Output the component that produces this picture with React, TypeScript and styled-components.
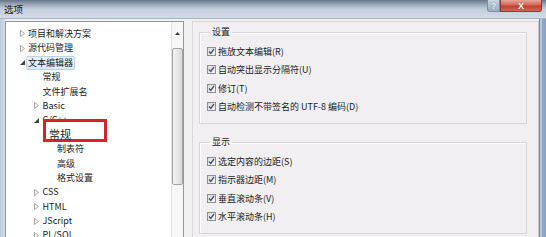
import React from "react";
import styled, { createGlobalStyle } from "styled-components";

const GlobalStyle = createGlobalStyle`
  html, body {
    margin: 0;
    padding: 0;
  }
  body {
    width: 546px;
    height: 237px;
    overflow: hidden;
    background: #c6d4e3;
    font-family: "Noto Sans CJK SC", "Noto Sans", sans-serif;
  }
`;

const Window = styled.div`
  width: 546px;
  height: 237px;
  display: flex;
  flex-direction: column;
  overflow: hidden;
`;

const TitleBar = styled.div`
  height: 18px;
  flex: none;
  display: flex;
  align-items: flex-start;
  background: linear-gradient(
    180deg,
    #66748a 0px,
    #95a3b4 4px,
    #c2cedb 9px,
    #d2dce7 18px
  );
  border-bottom: 1px solid #a7b5c4;
`;

const Title = styled.span`
  font-size: 9.5px;
  line-height: 18px;
  padding-left: 4px;
  color: #141414;
`;

const Caption = styled.div`
  margin-left: auto;
  margin-right: 4px;
  display: flex;
`;

const CaptionButton = styled.div<{ $close?: boolean }>`
  width: ${(p) => (p.$close ? 42 : 13)}px;
  height: 12px;
  box-sizing: border-box;
  display: flex;
  align-items: center;
  justify-content: center;
  font-family: "Liberation Sans", sans-serif;
  font-weight: bold;
  font-size: 9px;
  color: ${(p) => (p.$close ? "#ffffff" : "#eef3f8")};
  border: 1px solid ${(p) => (p.$close ? "#8a3a30" : "#7d8ea3")};
  border-top: none;
  border-radius: ${(p) => (p.$close ? "0 0 3px 0" : "0 0 0 3px")};
  background: ${(p) =>
    p.$close
      ? "linear-gradient(180deg, #e6a598 0%, #d0675a 45%, #c2402f 55%, #d0665a 100%)"
      : "linear-gradient(180deg, #c9d5e2 0%, #aebfd1 50%, #9fb1c6 100%)"};
  text-shadow: 0 0 1px rgba(0, 0, 0, 0.4);
`;

const Main = styled.div`
  flex: 1;
  min-height: 0;
  display: flex;
`;

const LeftFrame = styled.div`
  width: 5px;
  flex: none;
  background: linear-gradient(90deg, #bccbdc, #cfdbe8);
`;

const RightFrame = styled.div`
  width: 7px;
  flex: none;
  background: linear-gradient(
    90deg,
    #7188aa 0px,
    #7188aa 1px,
    #b7c7dc 1px,
    #b7c7dc 3px,
    #91a7c5 3px,
    #8aa1c0 7px
  );
`;

const Body = styled.div`
  flex: 1;
  min-width: 0;
  display: flex;
  gap: 8px;
  padding-top: 2px;
  background: #f0f0f0;
`;

const Tree = styled.div`
  width: 179px;
  flex: none;
  box-sizing: border-box;
  border: 1px solid #8e99a6;
  border-bottom: none;
  background: #ffffff;
  display: flex;
`;

const TreeList = styled.div`
  flex: 1;
  padding-top: 4.8px;
`;

const Row = styled.div<{ $level: number }>`
  height: 14.4px;
  display: flex;
  align-items: center;
  padding-left: ${(p) => 12 + p.$level * 14.5}px;
  font-size: 9px;
  color: #1b1b1b;
  white-space: nowrap;
`;

const ArrowCell = styled.span`
  width: 8px;
  margin-right: 2px;
  display: flex;
  align-items: center;
  justify-content: center;
`;

const Label = styled.span<{ $selected?: boolean }>`
  display: inline-block;
  line-height: 12px;
  margin-left: ${(p) => (p.$selected ? "-2px" : "0")};
  padding: ${(p) => (p.$selected ? "0 1px" : "0")};
  border: ${(p) => (p.$selected ? "1px solid #b4d3f3" : "none")};
  border-radius: 2px;
  background: ${(p) =>
    p.$selected ? "linear-gradient(180deg, #eef6fe, #d9e9fa)" : "none"};
`;

const Mark = styled.span`
  position: relative;
  display: inline-block;
  line-height: 14.4px;
`;

const MarkBox = styled.span`
  position: absolute;
  left: -14px;
  top: -7.6px;
  width: 64px;
  height: 23px;
  box-sizing: border-box;
  border: 3.5px solid #d3242c;
  background: #ffffff;
`;

const MarkText = styled.span`
  position: relative;
  font-size: 11px;
  margin-left: -8px;
  color: #222;
`;

const ScrollBar = styled.div`
  width: 11px;
  flex: none;
  display: flex;
  flex-direction: column;
  background: #f7f7f7;
  border-left: 1px solid #e2e2e2;
`;

const ScrollButton = styled.div`
  height: 22px;
  flex: none;
  display: flex;
  align-items: center;
  justify-content: center;
`;

const Thumb = styled.div`
  height: 137px;
  margin-top: 4px;
  box-sizing: border-box;
  border: 1px solid #a3a3a3;
  border-radius: 2px;
  background: linear-gradient(90deg, #f4f4f4, #e4e4e4 60%, #d8d8d8);
`;

const RightPanel = styled.div`
  flex: 1;
  box-sizing: border-box;
  border: 1px solid #d9d9d9;
  border-bottom: none;
  border-right-color: #c9c9c9;
  background: #f1eff1;
  padding: 4px 11px 0 6px;
  display: flex;
  flex-direction: column;
  gap: 12px;
`;

const Group = styled.fieldset`
  margin: 0;
  padding: 4px 0 7px 7px;
  border: 1px solid #d6d6d8;
  box-shadow: inset 1px 1px 0 #ffffff;
  min-width: 0;
`;

const Legend = styled.legend`
  font-size: 9px;
  line-height: 12px;
  padding: 0 2px;
  margin-left: 3px;
  color: #1b1b1b;
`;

const CheckRow = styled.label`
  height: 18.5px;
  display: flex;
  align-items: center;
  gap: 2px;
  font-size: 9px;
  color: #1b1b1b;
  white-space: nowrap;
`;

const Box = styled.span`
  width: 9px;
  height: 9px;
  box-sizing: border-box;
  border: 1px solid #8e8f8f;
  background: linear-gradient(135deg, #dadada, #f7f7f7);
  display: flex;
  align-items: center;
  justify-content: center;
`;

const ClosedArrow = () => (
  <svg width="5" height="7" viewBox="0 0 5 7">
    <path d="M0.5 0.5 L4.5 3.5 L0.5 6.5 Z" fill="none" stroke="#a6a6a6" />
  </svg>
);

const OpenArrow = () => (
  <svg width="5" height="5" viewBox="0 0 5 5">
    <path d="M5 0 L5 5 L0 5 Z" fill="#404040" />
  </svg>
);

const CheckMark = () => (
  <svg width="7" height="7" viewBox="0 0 7 7">
    <path d="M1 3.5 L2.8 5.5 L6 1" fill="none" stroke="#3d5272" strokeWidth="1.3" />
  </svg>
);

type TreeItem = {
  label: string;
  level: number;
  arrow?: "open" | "closed";
  selected?: boolean;
  marked?: boolean;
};

const treeItems: TreeItem[] = [
  { label: "项目和解决方案", level: 0, arrow: "closed" },
  { label: "源代码管理", level: 0, arrow: "closed" },
  { label: "文本编辑器", level: 0, arrow: "open", selected: true },
  { label: "常规", level: 1 },
  { label: "文件扩展名", level: 1 },
  { label: "Basic", level: 1, arrow: "closed" },
  { label: "C/C++", level: 1, arrow: "open" },
  { label: "常规", level: 2, marked: true },
  { label: "制表符", level: 2 },
  { label: "高级", level: 2 },
  { label: "格式设置", level: 2 },
  { label: "CSS", level: 1, arrow: "closed" },
  { label: "HTML", level: 1, arrow: "closed" },
  { label: "JScript", level: 1, arrow: "closed" },
  { label: "PL/SQL", level: 1, arrow: "closed" },
];

const groups = [
  {
    title: "设置",
    items: [
      "拖放文本编辑(R)",
      "自动突出显示分隔符(U)",
      "修订(T)",
      "自动检测不带签名的 UTF-8 编码(D)",
    ],
  },
  {
    title: "显示",
    items: ["选定内容的边距(S)", "指示器边距(M)", "垂直滚动条(V)", "水平滚动条(H)"],
  },
];

const App: React.FC = () => {
  return (
    <>
      <GlobalStyle />
      <Window>
        <TitleBar>
          <Title>选项</Title>
          <Caption>
            <CaptionButton>?</CaptionButton>
            <CaptionButton $close>X</CaptionButton>
          </Caption>
        </TitleBar>
        <Main>
          <LeftFrame />
          <Body>
            <Tree>
              <TreeList>
                {treeItems.map((item, i) => (
                  <Row key={i} $level={item.level}>
                    <ArrowCell>
                      {item.arrow === "closed" && <ClosedArrow />}
                      {item.arrow === "open" && <OpenArrow />}
                    </ArrowCell>
                    {item.marked ? (
                      <Mark>
                        <MarkBox />
                        <MarkText>{item.label}</MarkText>
                      </Mark>
                    ) : (
                      <Label $selected={item.selected}>{item.label}</Label>
                    )}
                  </Row>
                ))}
              </TreeList>
              <ScrollBar>
                <ScrollButton>
                  <svg width="5" height="3" viewBox="0 0 5 3">
                    <path d="M0 3 L2.5 0 L5 3 Z" fill="#3a3a3a" />
                  </svg>
                </ScrollButton>
                <Thumb />
              </ScrollBar>
            </Tree>
            <RightPanel>
              {groups.map((g) => (
                <Group key={g.title}>
                  <Legend>{g.title}</Legend>
                  {g.items.map((text) => (
                    <CheckRow key={text}>
                      <Box>
                        <CheckMark />
                      </Box>
                      {text}
                    </CheckRow>
                  ))}
                </Group>
              ))}
            </RightPanel>
          </Body>
          <RightFrame />
        </Main>
      </Window>
    </>
  );
};

export default App;
